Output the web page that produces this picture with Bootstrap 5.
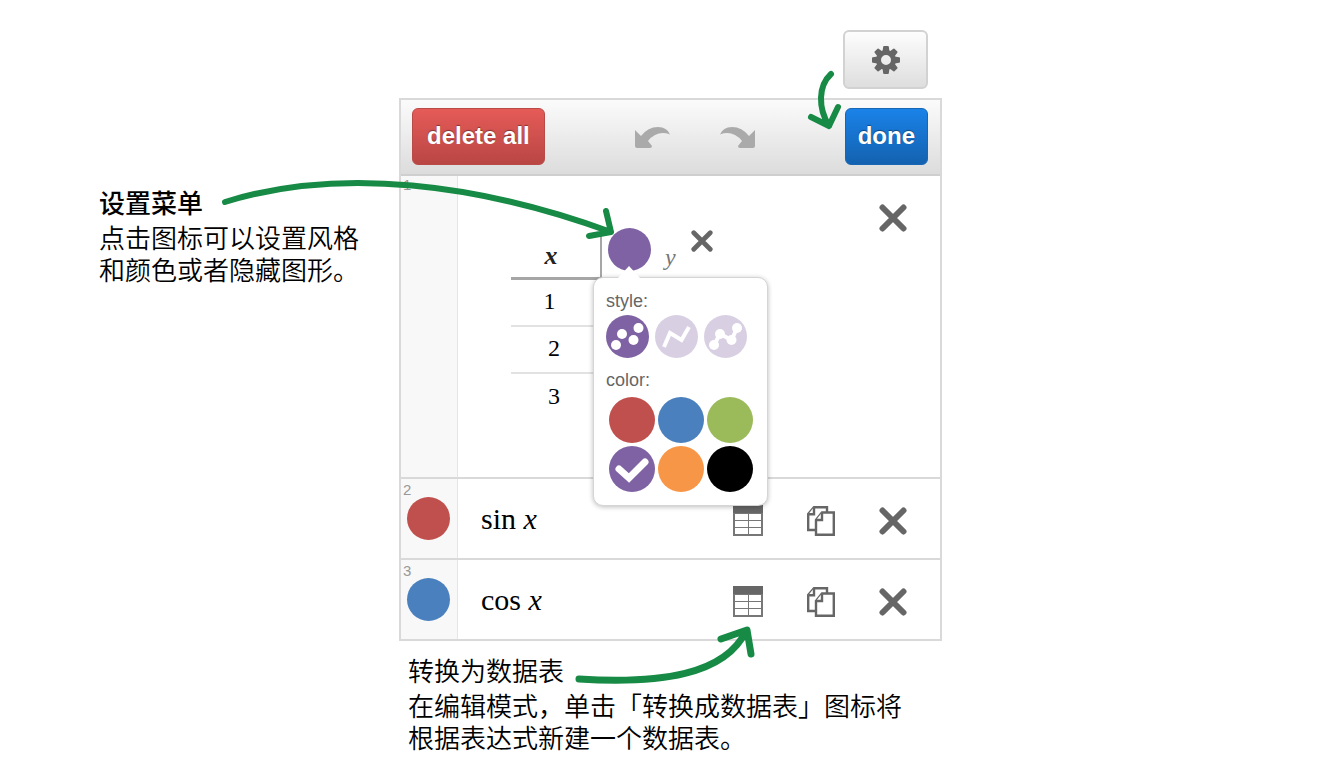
<!DOCTYPE html>
<html lang="zh-CN">
<head>
<meta charset="utf-8">
<meta name="viewport" content="width=device-width, initial-scale=1">
<title>编辑模式说明</title>
<link href="https://cdn.jsdelivr.net/npm/bootstrap@5.3.0/dist/css/bootstrap.min.css" rel="stylesheet">
<style>
  :root { --ink: #666; --line: #d9d9d9; --purple: #7f62a3; --green: #178a45; }
  body { background: #fff; color: #000; font-family: "Liberation Sans", "Noto Sans CJK SC", sans-serif; }
  .stage { display: grid; grid-template-columns: minmax(399px, 399fr) minmax(543px, 543fr) minmax(0, 388fr); padding-top: 30px; }
  .note { font-family: "Noto Sans CJK SC", sans-serif; font-size: 26px; line-height: 32px; font-weight: 350; white-space: nowrap; }
  .note h2 { font-size: 26px; line-height: 32px; font-weight: 350; margin: 0 0 3px; }
  .note h2.strong { font-weight: 500; }
  .note-left { padding: 156px 0 0 99px; }
  .note-below { padding: 13px 0 0 9px; }

  .tool { border-radius: 6px; font-size: 24px; font-weight: 700; line-height: 32px; height: 57px; padding: 0 14px; }
  .tool-gear { width: 85px; height: 59px; border: 2px solid #d2d2d2; background: linear-gradient(#fdfdfd, #dedede); margin: 0 14px 9px 0; }
  .tool-delete, .tool-delete:hover { color: #fff; border: 1px solid #b94a48; background: linear-gradient(#e55b58, #b94644); text-shadow: 0 -1px 1px #0006; }
  .tool-done, .tool-done:hover { color: #fff; border: 1px solid #1767b4; background: linear-gradient(#1a82e8, #1462b0); text-shadow: 0 -1px 1px #0006; padding: 0 12px; }

  .panel { border: 2px solid var(--line); }
  .bar { height: 76px; padding: 0 12px 2px 11px; background: linear-gradient(#fbfbfb, #dcdcdc); border-bottom: 2px solid #cfcfcf; }
  .bar-mid { gap: 48px; padding-top: 2px; }
  .bare { border: 0; background: none; padding: 0; line-height: 0; color: var(--ink); }
  .bare svg, .swatch svg { display: block; }

  .expr { border-bottom: 2px solid var(--line); height: 81px; }
  .expr:last-child { border-bottom: 0; height: 79px; }
  .expr.tall { height: 303px; }
  .gutter { width: 57px; background: #f8f8f8; border-right: 1px solid #e6e6e6; padding: 2px 2px 0; font-size: 15px; line-height: 18px; color: #999; }
  .tall .gutter { padding-top: 0; }
  .dot { width: 43px; height: 43px; border-radius: 50%; border: 0; padding: 0; display: block; }
  .gutter .dot { margin: -2px 0 0 4px; }
  .math { font-family: "Liberation Serif", serif; font-size: 30px; line-height: 36px; padding-left: 23px; }
  .tools { padding: 4px 33px 0 0; gap: 44px; }

  .grid-data { margin: 51px 0 0 53px; border-collapse: separate; border-spacing: 0; font-family: "Liberation Serif", serif; font-size: 24px; line-height: 30px; }
  .grid-data th, .grid-data td { width: 89px; text-align: center; padding: 0 0 4px; }
  .grid-data td { height: 47px; border-bottom: 2px solid #e2e2e2; }
  .grid-data tr:last-child td { border-bottom: 0; }
  .grid-data thead th { height: 53px; border-bottom: 3px solid #a6a6a6; font-weight: 400; font-style: italic; }
  .grid-data thead .col-x { font-size: 26px; padding: 8px 9px 0 0; font-weight: 700; color: #222; }
  .grid-data .col-y { width: 120px; border-left: 2px solid #a6a6a6; vertical-align: top; padding: 1px 0 0 6px; color: #777; }
  .grid-data td:first-child { padding-right: 3px; }
  .grid-data tbody tr:first-child td:first-child { padding-right: 12px; }
  .col-name { padding: 14px 0 0 14px; }
  .col-x-out { margin: 2px 0 0 15px; }

  .pop { position: absolute; top: 49px; left: -15px; width: 175px; z-index: 2; background: #fff; border: 1px solid #d5d5d5; border-radius: 10px; box-shadow: 0 1px 5px #0004; padding: 12px 12px 13px; font: 18px/22px "Liberation Sans", sans-serif; color: var(--ink); text-align: left; }
  .pop::before { content: ""; position: absolute; top: -12px; left: 24px; border: solid transparent; border-width: 0 11px 12px; border-bottom-color: #fff; }
  .styles { display: flex; gap: 6px; margin: 3px 0 11px; }
  .styles .swatch:not(.on) { opacity: .3; }
  .colors { display: grid; grid-template-columns: repeat(3, 46px); gap: 3px; margin: 6px 0 0 3px; }
  .swatch { display: block; cursor: pointer; line-height: 0; }
  .colors .swatch { width: 46px; height: 46px; border-radius: 50%; }

  .red { background: #c0504d; } .blue { background: #4a80bd; } .lime { background: #9bba59; }
  .violet { background: var(--purple); } .orange { background: #f79646; } .black { background: #000; }

  .arrow { position: absolute; z-index: 3; pointer-events: none; fill: none; stroke: var(--green); stroke-width: 6; stroke-linecap: round; stroke-linejoin: round; }
  .arrow-menu { left: -180px; top: 76px; }
  .arrow-done { left: 401px; top: -32px; }
  .arrow-table { left: 172px; top: 522px; stroke-width: 7; }
</style>
</head>
<body>
<svg class="d-none" aria-hidden="true">
  <symbol id="i-x" viewBox="0 0 28 28"><path d="M3.500 3.500 24.500 24.500M24.500 3.500 3.500 24.500" fill="none" stroke="currentColor" stroke-width="6" stroke-linecap="round"/></symbol>
  <symbol id="i-table" viewBox="0 0 30 31"><path d="M0 0h30v31H0z" fill="#777"/><path d="M0 0h30v8H0z" fill="#666"/><path fill="#fff" d="M2 9h13v6H2zM16 9h12v6H16zM2 16h13v6H2zM16 16h12v6H16zM2 23h13v6H2zM16 23h12v6H16z"/></symbol>
  <symbol id="i-copy" viewBox="0 0 28 30"><g fill="#fff" stroke="currentColor" stroke-width="2.400"><path d="M7 1.200h13V24H1.200V8z"/><path d="M7 1.200v7H1.200"/><path d="M15 6.500h11.800v22.300H9V14z"/><path d="M15 6.500V14H9"/></g></symbol>
</svg>

<main class="stage">
  <aside class="note note-left">
    <h2 class="strong">设置菜单</h2>
    <p class="m-0">点击图标可以设置风格<br>和颜色或者隐藏图形。</p>
  </aside>

  <section>
    <div class="d-flex justify-content-end">
      <button type="button" class="btn tool tool-gear d-flex align-items-center justify-content-center p-0" aria-label="设置">
        <svg width="28" height="28" viewBox="-14 -14 28 28" fill="#666"><defs><path id="tooth" d="M-3.500-8.500-2.800-13.200Q-2.700-14-2-14H2Q2.700-14 2.800-13.200L3.500-8.500z"/></defs><use href="#tooth"/><use href="#tooth" transform="rotate(45)"/><use href="#tooth" transform="rotate(90)"/><use href="#tooth" transform="rotate(135)"/><use href="#tooth" transform="rotate(180)"/><use href="#tooth" transform="rotate(225)"/><use href="#tooth" transform="rotate(270)"/><use href="#tooth" transform="rotate(315)"/><circle r="7.500" fill="none" stroke="#666" stroke-width="5"/></svg>
      </button>
    </div>

    <div class="position-relative">
      <div class="panel">
        <div class="bar d-flex align-items-center justify-content-between">
          <button type="button" class="btn tool tool-delete">delete all</button>
          <div class="bar-mid d-flex">
            <button type="button" class="bare" aria-label="undo"><svg width="37" height="23" viewBox="0 0 37 23"><path fill="#aaa" d="M1 4 7 10Q14 1 24 1 33 1 36 8.500 28 5.500 21 9 17 11 14 15L18 20Q18 22 16 22H3Q1 22 1 20z"/></svg></button>
            <button type="button" class="bare" aria-label="redo"><svg width="37" height="23" viewBox="0 0 37 23"><path fill="#aaa" transform="translate(37)scale(-1 1)" d="M1 4 7 10Q14 1 24 1 33 1 36 8.500 28 5.500 21 9 17 11 14 15L18 20Q18 22 16 22H3Q1 22 1 20z"/></svg></button>
          </div>
          <button type="button" class="btn tool tool-done">done</button>
        </div>

        <div class="expr tall d-flex">
          <div class="gutter">1</div>
          <div class="flex-grow-1">
            <table class="grid-data">
              <thead>
                <tr>
                  <th class="col-x" scope="col">x</th>
                  <th class="col-y" scope="col">
                    <div class="position-relative d-flex">
                      <button type="button" class="dot violet" aria-label="风格与颜色"></button>
                      <span class="col-name">y</span>
                      <button type="button" class="bare col-x-out align-self-start" aria-label="删除列"><svg width="22" height="22"><use href="#i-x"/></svg></button>
                      <div class="pop fst-normal">
                        <div>style:</div>
                        <div class="styles">
                          <input class="btn-check" type="radio" name="style" id="s1" aria-label="points" checked>
                          <label class="swatch on" for="s1"><svg width="43" height="43"><circle cx="21.500" cy="21.500" r="21.500" fill="#7f62a3"/><g fill="#fff"><circle cx="10" cy="30" r="5"/><circle cx="16" cy="19" r="5"/><circle cx="27.500" cy="25" r="5"/><circle cx="32.500" cy="13" r="5"/></g></svg></label>
                          <input class="btn-check" type="radio" name="style" id="s2" aria-label="lines">
                          <label class="swatch" for="s2"><svg width="43" height="43"><circle cx="21.500" cy="21.500" r="21.500" fill="#7f62a3"/><path d="M9 32 15 18 26.500 25 34 12" fill="none" stroke="#fff" stroke-width="4"/></svg></label>
                          <input class="btn-check" type="radio" name="style" id="s3" aria-label="points and lines">
                          <label class="swatch" for="s3"><svg width="43" height="43"><circle cx="21.500" cy="21.500" r="21.500" fill="#7f62a3"/><path d="M10 30 16 19 27.500 25 33 13" fill="none" stroke="#fff" stroke-width="4"/><g fill="#fff"><circle cx="10" cy="30" r="5"/><circle cx="16" cy="19" r="5"/><circle cx="27.500" cy="25" r="5"/><circle cx="33" cy="13" r="5"/></g></svg></label>
                        </div>
                        <div>color:</div>
                        <div class="colors">
                          <div><input class="btn-check" type="radio" name="color" id="c1" aria-label="red"><label class="swatch red" for="c1"></label></div>
                          <div><input class="btn-check" type="radio" name="color" id="c2" aria-label="blue"><label class="swatch blue" for="c2"></label></div>
                          <div><input class="btn-check" type="radio" name="color" id="c3" aria-label="green"><label class="swatch lime" for="c3"></label></div>
                          <div><input class="btn-check" type="radio" name="color" id="c4" aria-label="purple" checked><label class="swatch violet" for="c4"><svg width="46" height="46"><path d="M10 23 20 32 36 16" fill="none" stroke="#fff" stroke-width="7" stroke-linejoin="miter" stroke-linecap="round"/></svg></label></div>
                          <div><input class="btn-check" type="radio" name="color" id="c5" aria-label="orange"><label class="swatch orange" for="c5"></label></div>
                          <div><input class="btn-check" type="radio" name="color" id="c6" aria-label="black"><label class="swatch black" for="c6"></label></div>
                        </div>
                      </div>
                    </div>
                  </th>
                </tr>
              </thead>
              <tbody>
                <tr><td>1</td><td></td></tr>
                <tr><td>2</td><td></td></tr>
                <tr><td>3</td><td></td></tr>
              </tbody>
            </table>
          </div>
          <div class="tools pt-4"><button type="button" class="bare mt-1" aria-label="删除"><svg width="28" height="28"><use href="#i-x"/></svg></button></div>
        </div>

        <div class="expr d-flex">
          <div class="gutter">2<button type="button" class="dot red" aria-label="sin x"></button></div>
          <div class="math flex-grow-1 align-self-center">sin <i>x</i></div>
          <div class="tools d-flex align-items-center">
            <button type="button" class="bare" aria-label="转换为数据表"><svg width="30" height="31"><use href="#i-table"/></svg></button>
            <button type="button" class="bare" aria-label="复制"><svg width="28" height="30"><use href="#i-copy"/></svg></button>
            <button type="button" class="bare" aria-label="删除"><svg width="28" height="28"><use href="#i-x"/></svg></button>
          </div>
        </div>

        <div class="expr d-flex">
          <div class="gutter">3<button type="button" class="dot blue" aria-label="cos x"></button></div>
          <div class="math flex-grow-1 align-self-center">cos <i>x</i></div>
          <div class="tools d-flex align-items-center">
            <button type="button" class="bare" aria-label="转换为数据表"><svg width="30" height="31"><use href="#i-table"/></svg></button>
            <button type="button" class="bare" aria-label="复制"><svg width="28" height="30"><use href="#i-copy"/></svg></button>
            <button type="button" class="bare" aria-label="删除"><svg width="28" height="28"><use href="#i-x"/></svg></button>
          </div>
        </div>
      </div>

      <svg class="arrow arrow-menu" width="400" height="70" viewBox="219 174 400 70"><path d="M225 202C340 166 480 184 611 232M606 211 611 232 589 236"/></svg>
      <svg class="arrow arrow-done" width="50" height="70" viewBox="800 66 50 70"><path d="M831 74C818 86 818 108 829 126M811 117 829 126 838 107"/></svg>
      <svg class="arrow arrow-table" width="190" height="70" viewBox="571 620 190 70"><path d="M579 679C660 684 725 675 746 631M721 639 747 630 751 654"/></svg>
    </div>

    <div class="note note-below">
      <h2>转换为数据表</h2>
      <p class="m-0">在编辑模式，单击「转换成数据表」图标将<br>根据表达式新建一个数据表。</p>
    </div>
  </section>
</main>
<script src="https://cdn.jsdelivr.net/npm/bootstrap@5.3.0/dist/js/bootstrap.bundle.min.js"></script>
</body>
</html>
